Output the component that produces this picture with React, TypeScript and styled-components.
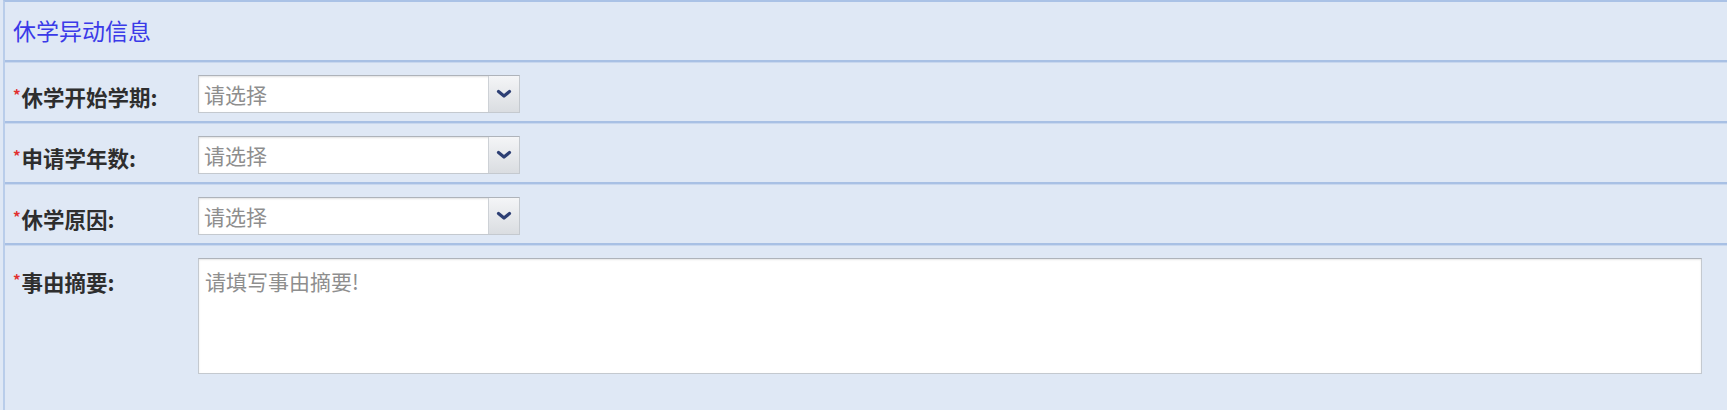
import React from "react";
import styled, { createGlobalStyle } from "styled-components";

const GlobalStyle = createGlobalStyle`
  html, body {
    margin: 0;
    padding: 0;
    background: #dfe8f5;
  }
  body {
    font-family: "Noto Sans CJK SC", "Noto Sans", sans-serif;
  }
`;

const Panel = styled.div`
  margin-left: 3px;
  border-left: 2px solid #b9cdea;
  border-top: 2px solid #aac2e6;
  min-height: 408px;
  background: #dfe8f5;
`;

const SectionHeader = styled.div`
  height: 60px;
  display: flex;
  align-items: center;
  padding-left: 8px;
  padding-bottom: 2px;
  box-sizing: border-box;
  font-size: 23px;
  color: #3a3ae8;
  border-bottom: 2px solid #a8c0e4;
  box-shadow: 0 1px 0 #c8d7ee;
`;

const FieldRow = styled.div<{ $tall?: boolean }>`
  display: flex;
  align-items: ${(p) => (p.$tall ? "flex-start" : "center")};
  height: ${(p) => (p.$tall ? "auto" : "61px")};
  padding-top: ${(p) => (p.$tall ? "13px" : "4px")};
  box-sizing: border-box;
  border-bottom: ${(p) => (p.$tall ? "none" : "2px solid #a8c0e4")};
  box-shadow: ${(p) => (p.$tall ? "none" : "0 1px 0 #c8d7ee")};
`;

const Label = styled.div<{ $top?: boolean }>`
  width: 193px;
  flex: none;
  box-sizing: border-box;
  padding-left: 8px;
  padding-top: ${(p) => (p.$top ? "7px" : "4px")};
  font-size: 21.5px;
  font-weight: 700;
  color: #2e2e2e;
  line-height: 30px;
  white-space: nowrap;
`;

const Required = styled.span`
  color: #e2302f;
  font-size: 15px;
  font-weight: 700;
  vertical-align: 5px;
  margin-right: 1px;
`;

const SelectBox = styled.div`
  display: flex;
  width: 322px;
  height: 38px;
  box-sizing: border-box;
  border: 1px solid #c4c9cf;
  border-top-color: #aeb3ba;
  background: #ffffff;
  box-shadow: inset 0 1px 2px rgba(0, 0, 0, 0.12);
`;

const SelectText = styled.div`
  flex: 1;
  display: flex;
  align-items: center;
  padding-left: 5px;
  font-size: 21px;
  color: #8e8e8e;
`;

const SelectButton = styled.div`
  width: 30px;
  flex: none;
  display: flex;
  align-items: center;
  justify-content: center;
  border-left: 1px solid #cdd1d6;
  background: linear-gradient(#f4f5f7, #dadde1);
`;

const MemoArea = styled.textarea`
  width: 1504px;
  height: 116px;
  box-sizing: border-box;
  resize: none;
  border: 1px solid #c4c9cf;
  border-top-color: #aeb3ba;
  box-shadow: inset 0 1px 2px rgba(0, 0, 0, 0.1);
  background: #ffffff;
  padding: 7px 6px;
  font-family: "Noto Sans CJK SC", "Noto Sans", sans-serif;
  font-size: 21px;
  line-height: 31px;
  color: #333;
  outline: none;
  &::placeholder {
    color: #8e8e8e;
  }
`;

const Chevron = () => (
  <svg width="16" height="10" viewBox="0 0 16 10">
    <polyline
      points="2.5,2.5 8,7 13.5,2.5"
      fill="none"
      stroke="#2d3f74"
      strokeWidth="3.2"
      strokeLinecap="round"
      strokeLinejoin="round"
    />
  </svg>
);

const Select = ({ text }: { text: string }) => (
  <SelectBox>
    <SelectText>{text}</SelectText>
    <SelectButton>
      <Chevron />
    </SelectButton>
  </SelectBox>
);

const fields = ["休学开始学期:", "申请学年数:", "休学原因:"];

export default function App() {
  return (
    <>
      <GlobalStyle />
      <Panel>
        <SectionHeader>休学异动信息</SectionHeader>
        {fields.map((f) => (
          <FieldRow key={f}>
            <Label>
              <Required>*</Required>
              {f}
            </Label>
            <Select text="请选择" />
          </FieldRow>
        ))}
        <FieldRow $tall>
          <Label $top>
            <Required>*</Required>
            事由摘要:
          </Label>
          <MemoArea placeholder="请填写事由摘要!" />
        </FieldRow>
      </Panel>
    </>
  );
}
